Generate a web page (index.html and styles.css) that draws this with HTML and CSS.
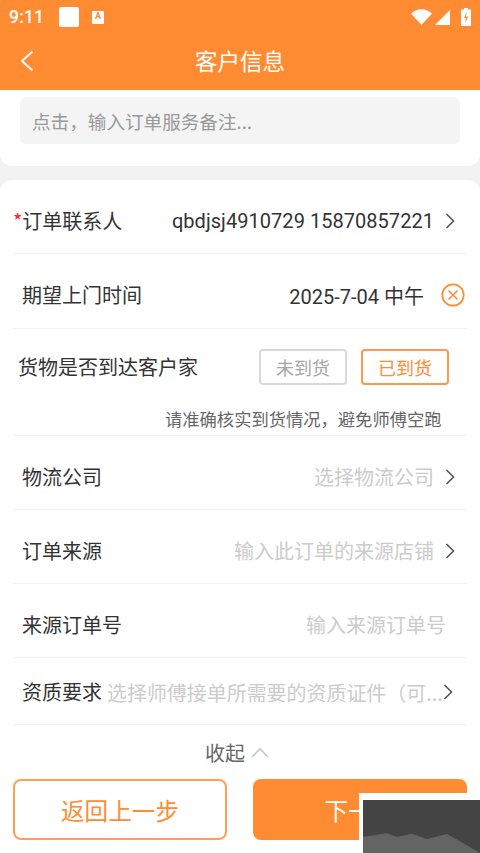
FILE: index.html
```html
<!DOCTYPE html>
<html lang="zh">
<head>
<meta charset="utf-8">
<title>客户信息</title>
<link rel="stylesheet" href="styles.css">
</head>
<body>
<div class="page">
  <div class="top">
    <div class="status">
      <span class="time">9:11</span>
      <span class="app-square"></span>
      <span class="app-a">A</span>
      <span class="status-right">
        <svg class="i-wifi" viewBox="0 0 22 16"><path d="M0 4.500C3 1.700 7 0 11 0s8 1.700 11 4.500L11 16z" fill="#fff"/></svg>
        <svg class="i-signal" viewBox="0 0 15 15"><path d="M15 0v15H0z" fill="#fff"/></svg>
        <svg class="i-batt" viewBox="0 0 10 18"><path d="M3 0h4v1.500h3V18H0V1.500h3z" fill="#fff"/><path d="M5.800 3.500 3 10h2l-.8 5 3-6.500H5z" fill="#ff8c33"/></svg>
      </span>
    </div>
    <div class="nav">
      <svg class="back" viewBox="0 0 14 22"><path d="M12.500 1.500 2 11l10.500 9.500" fill="none" stroke="#fff" stroke-width="1.900"/></svg>
      <span class="title">客户信息</span>
    </div>
  </div>

  <div class="remark-card">
    <div class="remark-input">点击，输入订单服务备注...</div>
  </div>

  <div class="form-card">
    <div class="row row-contact">
      <span class="label label-req"><span class="star">*</span>订单联系人</span>
      <span class="value">qbdjsj4910729 15870857221</span>
      <svg class="chev" viewBox="0 0 10 16"><path d="M1.500 1 8.500 8l-7 7" fill="none" stroke="#555" stroke-width="1.600"/></svg>
    </div>
    <div class="row row-time">
      <span class="label">期望上门时间</span>
      <span class="value">2025-7-04 中午</span>
      <svg class="clear" viewBox="0 0 24 24"><circle cx="12" cy="12" r="10.700" fill="none" stroke="#ff8c33" stroke-width="1.700"/><path d="M7.500 7.500l9 9m0-9-9 9" fill="none" stroke="#ff8c33" stroke-width="1.500"/></svg>
    </div>
    <div class="row-goods">
      <div class="goods-top">
        <span class="label">货物是否到达客户家</span>
        <span class="pill">未到货</span>
        <span class="pill pill-on">已到货</span>
      </div>
      <div class="tip">请准确核实到货情况，避免师傅空跑</div>
    </div>
    <div class="row row-std">
      <span class="label">物流公司</span>
      <span class="ph">选择物流公司</span>
      <svg class="chev" viewBox="0 0 10 16"><path d="M1.500 1 8.500 8l-7 7" fill="none" stroke="#555" stroke-width="1.600"/></svg>
    </div>
    <div class="row row-std">
      <span class="label">订单来源</span>
      <span class="ph">输入此订单的来源店铺</span>
      <svg class="chev" viewBox="0 0 10 16"><path d="M1.500 1 8.500 8l-7 7" fill="none" stroke="#555" stroke-width="1.600"/></svg>
    </div>
    <div class="row row-std">
      <span class="label">来源订单号</span>
      <span class="ph ph-end">输入来源订单号</span>
    </div>
    <div class="row row-qual">
      <span class="label">资质要求</span>
      <span class="ph ph-long">选择师傅接单所需要的资质证件（可...</span>
      <svg class="chev chev-tight" viewBox="0 0 10 16"><path d="M1.500 1 8.500 8l-7 7" fill="none" stroke="#555" stroke-width="1.600"/></svg>
    </div>
    <div class="collapse">
      <span>收起</span>
      <svg class="up" viewBox="0 0 18 11"><path d="M1 10 9 2l8 8" fill="none" stroke="#c8c8c8" stroke-width="1.600"/></svg>
    </div>
    <div class="actions">
      <div class="btn btn-ghost">返回上一步</div>
      <div class="btn btn-solid">下一步</div>
    </div>
  </div>

  <div class="float-thumb">
    <svg class="thumb-art" viewBox="0 0 117 53"><rect width="117" height="53" fill="#444"/><path d="M0 36.700 10 35.500 23 33 34 37 49 33.700 64 39 84 34 100 43 117 53H0z" fill="#646464"/></svg>
  </div>
</div>
</body>
</html>
```
FILE: styles.css
```css
* { box-sizing: border-box; }
html, body { margin: 0; padding: 0; }
body {
  width: 480px;
  height: 853px;
  overflow: hidden;
  background: #f2f2f2;
  font-family: "Noto Sans CJK SC", Roboto, sans-serif;
  color: #333;
}
.page { position: relative; width: 480px; height: 853px; display: flex; flex-direction: column; overflow: hidden; }

.top { height: 90px; background: #ff8c33; color: #fff; flex: none; }
.status { height: 34px; display: flex; align-items: center; padding: 0 8px 0 9px; }
.time { font-family: Roboto, sans-serif; font-size: 17.500px; font-weight: 500; letter-spacing: .2px; width: 50px; }
.app-square { width: 20px; height: 20px; background: #fff; border-radius: 2px; }
.app-a {
  width: 12px; height: 13px; margin-left: 13px; background: #fff; border-radius: 1px;
  color: #ff8c33; font: 700 9px/11px Roboto, sans-serif; text-align: center;
}
.status-right { margin-left: auto; display: flex; align-items: center; }
.i-wifi { width: 21px; height: 16px; }
.i-signal { width: 15px; height: 15px; margin-left: 3px; }
.i-batt { width: 10px; height: 18px; margin-left: 11px; margin-right: 1px; }

.nav { height: 56px; display: flex; align-items: center; justify-content: center; position: relative; padding-bottom: 5px; }
.back { position: absolute; left: 20px; top: 16px; width: 14px; height: 22px; }
.title { font-size: 22.500px; line-height: 32px; }

.remark-card {
  flex: none; height: 76px; background: #fff; border-radius: 0 0 12px 12px;
  padding: 7px 20px 0;
}
.remark-input {
  height: 47px; background: #f4f4f4; border-radius: 6px; padding: 0 12px;
  display: flex; align-items: center; font-size: 18.600px; color: #999;
}

.form-card {
  flex: 1; margin-top: 14px; background: #fff; border-radius: 12px 12px 0 0;
  padding: 0 13px; display: flex; flex-direction: column;
}
.row { display: flex; align-items: center; border-bottom: 1px solid #f2f2f2; flex: none; padding-top: 8px; }
.row-contact { height: 74px; }
.row-time { height: 75px; padding-left: 9px; }
.row-std { height: 74px; padding-left: 9px; }
.row-qual { height: 67px; padding-left: 9px; padding-top: 2px; }
.label { font-size: 20px; line-height: 28px; color: #333; white-space: nowrap; }
.label-req { display: flex; }
.star { color: #f52020; }
.value { margin-left: auto; font-size: 20px; font-family: Roboto, "Noto Sans CJK SC", sans-serif; color: #333; white-space: nowrap; }
.row-contact .value { margin-right: 11px; letter-spacing: .04px; }
.row-time .value { margin-right: 17px; }
.chev { width: 10px; height: 16px; margin-right: 12px; flex: none; }
.chev-tight { margin-left: 0; }
.clear { width: 24px; height: 24px; margin-right: 2px; flex: none; }
.ph { margin-left: auto; font-size: 20px; color: #ccc; white-space: nowrap; margin-right: 11px; }
.ph-end { margin-right: 21px; }
.ph-long { margin-left: 5px; margin-right: 0; letter-spacing: -0.050px; }

.row-goods { height: 107px; flex: none; padding: 20px 5px 0; border-bottom: 1px solid #f2f2f2; }
.goods-top { display: flex; align-items: center; height: 36px; gap: 14px; }
.pill {
  width: 88px; height: 36px; border: 2px solid #d8d8d8; border-radius: 4px;
  display: flex; align-items: center; justify-content: center; font-size: 18px; color: #a6a6a6;
}
.goods-top .label { margin-right: 47px; }
.pill-on { border-color: #ff9a4d; color: #ff8c33; }
.tip { margin-top: 22px; padding-left: 147px; font-size: 17.300px; line-height: 24px; color: #666; white-space: nowrap; }

.collapse { height: 54px; flex: none; display: flex; align-items: center; justify-content: center; gap: 6px; font-size: 20px; color: #666; padding-right: 6px; }
.up { width: 18px; height: 11px; }

.actions { display: grid; grid-template-columns: 1fr 1fr; gap: 26px; }
.btn {
  height: 61px; border-radius: 8px; display: flex; align-items: center; justify-content: center;
  font-size: 23.600px;
}
.btn-ghost { border: 2px solid #ff9f57; color: #ff8c33; background: #fff; }
.btn-solid { background: #ff8c33; color: #fff; }

.float-thumb {
  position: absolute; left: 359px; top: 793px; width: 121px; height: 60px;
  background: #fff; padding: 7px 0 0 4px;
}
.thumb-art { display: block; width: 117px; height: 53px; }
```
